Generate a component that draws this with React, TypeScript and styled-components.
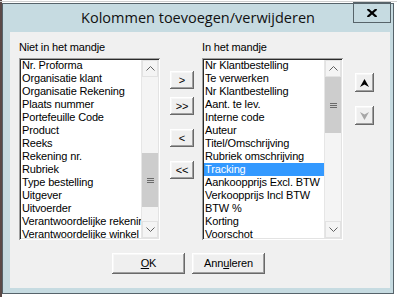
import React from "react";
import styled, { createGlobalStyle } from "styled-components";

const GlobalStyle = createGlobalStyle`
  html, body {
    margin: 0;
    padding: 0;
  }
  body {
    width: 397px;
    height: 297px;
    overflow: hidden;
    background: #fff;
    font-family: "Liberation Sans", Arial, sans-serif;
  }
`;

const notInBasket = [
  "Nr. Proforma",
  "Organisatie klant",
  "Organisatie Rekening",
  "Plaats nummer",
  "Portefeuille Code",
  "Product",
  "Reeks",
  "Rekening nr.",
  "Rubriek",
  "Type bestelling",
  "Uitgever",
  "Uitvoerder",
  "Verantwoordelijke rekening",
  "Verantwoordelijke winkel",
];

const inBasket = [
  "Nr Klantbestelling",
  "Te verwerken",
  "Nr Klantbestelling",
  "Aant. te lev.",
  "Interne code",
  "Auteur",
  "Titel/Omschrijving",
  "Rubriek omschrijving",
  "Tracking",
  "Aankoopprijs Excl. BTW",
  "Verkoopprijs Incl BTW",
  "BTW %",
  "Korting",
  "Voorschot",
];

const Screen = styled.div`
  width: 397px;
  height: 297px;
  box-sizing: border-box;
  padding: 3px 0 0 2px;
  background:
    linear-gradient(#cfcfcf, #cfcfcf) 0 1px / 100% 1px no-repeat,
    linear-gradient(#5b4a48, #5b4a48) 0 0 / 2px 100% no-repeat,
    #fff;
`;

const Window = styled.div`
  width: 392px;
  height: 291px;
  box-sizing: border-box;
  border: 1px solid #56636a;
  background: #c6dbe1;
  display: flex;
  flex-direction: column;
`;

const TitleBar = styled.div`
  height: 28px;
  flex: none;
  display: grid;
  grid-template-columns: 1fr auto 1fr;
  align-items: center;
`;

const Title = styled.div`
  grid-column: 2;
  font-family: "Open Sans", "Noto Sans", sans-serif;
  font-size: 14.5px;
  color: #111;
  margin-top: -2px;
  white-space: nowrap;
`;

const CloseButton = styled.div`
  grid-column: 3;
  justify-self: end;
  align-self: start;
  width: 38px;
  height: 21px;
  box-sizing: border-box;
  margin: -2px 2px 0 0;
  border: 1px solid #57646a;
  display: flex;
  align-items: center;
  justify-content: center;
`;

const Client = styled.div`
  flex: 1;
  margin: 0 3px 5px 7px;
  background: #f0f0f0;
  box-sizing: border-box;
  padding: 8px 0 0 9px;
  display: flex;
  flex-direction: column;
  font-size: 11px;
  letter-spacing: -0.15px;
  color: #000;
`;

const Lists = styled.div`
  display: flex;
  align-items: flex-start;
`;

const Panel = styled.div`
  width: 141px;
  display: flex;
  flex-direction: column;
`;

const Label = styled.div`
  height: 18px;
  box-sizing: border-box;
  padding-top: 1px;
  line-height: 13px;
  white-space: nowrap;
`;

const ListBox = styled.div`
  height: 182px;
  box-sizing: border-box;
  padding: 2px 2px 1px 2px;
  background: #fff;
  box-shadow:
    inset 1px 1px #a0a0a0,
    inset -1px -1px #ffffff,
    inset 2px 2px #2b2b2b,
    inset -2px -2px #e3e3e3;
  display: flex;
  overflow: hidden;
`;

const Items = styled.div`
  flex: 1;
  min-width: 0;
  margin-top: -1px;
  overflow: hidden;
`;

const Item = styled.div<{ $selected?: boolean }>`
  height: 13px;
  line-height: 12px;
  padding-left: 1px;
  white-space: nowrap;
  overflow: hidden;
  background: ${(p) => (p.$selected ? "#3399ff" : "transparent")};
  color: ${(p) => (p.$selected ? "#fff" : "#000")};
`;

const ScrollBar = styled.div`
  width: 17px;
  flex: none;
  display: flex;
  flex-direction: column;
  background: #f4f4f4;
  border-left: 1px solid #e6e6e6;
  box-sizing: border-box;
  margin-bottom: 1px;
`;

const ScrollArrow = styled.div`
  height: 17px;
  flex: none;
  display: flex;
  align-items: center;
  justify-content: center;
  background: #f4f4f4;
  border: 1px solid #e2e2e2;
  box-sizing: border-box;
`;

const Track = styled.div`
  flex: 1;
  display: flex;
  flex-direction: column;
`;

const Thumb = styled.div<{ $top: number; $height: number }>`
  margin: ${(p) => p.$top}px 0 0 0;
  height: ${(p) => p.$height}px;
  background: #cdcdcd;
  display: flex;
  align-items: center;
  justify-content: center;
`;

const Grip = styled.div`
  width: 7px;
  height: 5px;
  background: repeating-linear-gradient(#6a6a6a 0 1px, transparent 1px 2px);
`;

const MoveColumn = styled.div`
  width: 24px;
  margin: 0 8px 0 10px;
  padding-top: 31px;
  display: flex;
  flex-direction: column;
`;

const OrderColumn = styled.div`
  width: 19px;
  margin-left: 12px;
  padding-top: 33px;
  display: flex;
  flex-direction: column;
  gap: 14px;
`;

const Button = styled.div<{ $w: number; $h: number; $gap?: number }>`
  width: ${(p) => p.$w}px;
  height: ${(p) => p.$h}px;
  margin-top: ${(p) => p.$gap ?? 0}px;
  box-sizing: border-box;
  background: #efefef;
  box-shadow:
    inset -1px -1px #696969,
    inset 1px 1px #ffffff,
    inset -2px -2px #a0a0a0,
    inset 2px 2px #f7f7f7;
  display: flex;
  align-items: center;
  justify-content: center;
  line-height: 13px;
  white-space: nowrap;
  flex: none;
`;

const Footer = styled.div`
  display: flex;
  gap: 7px;
  margin-top: 13px;
  padding-left: 93px;
`;

const Key = styled.span`
  text-decoration: underline;
`;

const Chevron = ({ down }: { down?: boolean }) => (
  <svg width="9" height="5" viewBox="0 0 9 5">
    <path
      d={down ? "M0.5 0.5 L4.5 4.5 L8.5 0.5" : "M0.5 4.5 L4.5 0.5 L8.5 4.5"}
      fill="none"
      stroke="#606060"
      strokeWidth="1"
    />
  </svg>
);

const OrderArrow = ({ down }: { down?: boolean }) => (
  <svg width="9" height="8" viewBox="0 0 9 8">
    <path
      d={down ? "M4.5 8 L9 0 L4.5 2.5 L0 0 Z" : "M4.5 0 L9 8 L4.5 5.5 L0 8 Z"}
      fill={down ? "#a6a6a6" : "#000"}
    />
  </svg>
);

const List = ({
  items,
  selected,
  thumbTop,
  thumbHeight,
}: {
  items: string[];
  selected?: number;
  thumbTop: number;
  thumbHeight: number;
}) => (
  <ListBox>
    <Items>
      {items.map((t, i) => (
        <Item key={i} $selected={i === selected}>
          {t}
        </Item>
      ))}
    </Items>
    <ScrollBar>
      <ScrollArrow>
        <Chevron />
      </ScrollArrow>
      <Track>
        <Thumb $top={thumbTop} $height={thumbHeight}>
          <Grip />
        </Thumb>
      </Track>
      <ScrollArrow>
        <Chevron down />
      </ScrollArrow>
    </ScrollBar>
  </ListBox>
);

export default function App() {
  return (
    <Screen>
      <GlobalStyle />
      <Window>
        <TitleBar>
          <Title>Kolommen toevoegen/verwijderen</Title>
          <CloseButton>
            <svg width="10" height="8" viewBox="0 0 10 8">
              <path d="M0.5 0 L9.5 8 M9.5 0 L0.5 8" stroke="#000" strokeWidth="2.2" />
            </svg>
          </CloseButton>
        </TitleBar>
        <Client>
          <Lists>
            <Panel>
              <Label>Niet in het mandje</Label>
              <List items={notInBasket} thumbTop={76} thumbHeight={54} />
            </Panel>
            <MoveColumn>
              <Button $w={24} $h={18}>&gt;</Button>
              <Button $w={24} $h={18} $gap={8}>&gt;&gt;</Button>
              <Button $w={24} $h={18} $gap={14}>&lt;</Button>
              <Button $w={24} $h={18} $gap={14}>&lt;&lt;</Button>
            </MoveColumn>
            <Panel>
              <Label>In het mandje</Label>
              <List items={inBasket} selected={8} thumbTop={0} thumbHeight={56} />
            </Panel>
            <OrderColumn>
              <Button $w={19} $h={19}>
                <OrderArrow />
              </Button>
              <Button $w={19} $h={19}>
                <OrderArrow down />
              </Button>
            </OrderColumn>
          </Lists>
          <Footer>
            <Button $w={73} $h={21}>
              <Key>O</Key>K
            </Button>
            <Button $w={73} $h={21}>
              Ann<Key>u</Key>leren
            </Button>
          </Footer>
        </Client>
      </Window>
    </Screen>
  );
}
